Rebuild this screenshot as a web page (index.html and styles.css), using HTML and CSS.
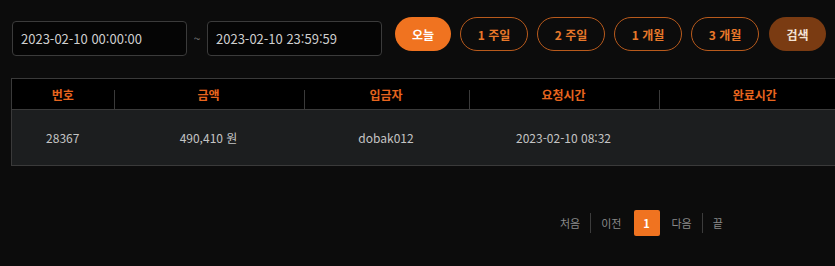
FILE: index.html
```html
<!DOCTYPE html>
<html lang="ko">
<head>
  <meta charset="UTF-8">
  <title>입금내역</title>
  <link rel="stylesheet" href="styles.css">
</head>
<body>
  <div class="search-bar">
    <input type="text" class="date-input" value="2023-02-10 00:00:00">
    <span class="tilde">~</span>
    <input type="text" class="date-input" value="2023-02-10 23:59:59">
    <div class="range-buttons">
      <button class="btn btn-active">오늘</button>
      <button class="btn btn-outline">1 주일</button>
      <button class="btn btn-outline">2 주일</button>
      <button class="btn btn-outline">1 개월</button>
      <button class="btn btn-outline">3 개월</button>
      <button class="btn btn-search">검색</button>
    </div>
  </div>

  <table class="list-table">
    <colgroup>
      <col class="c-num">
      <col class="c-amount">
      <col class="c-name">
      <col class="c-req">
      <col class="c-done">
    </colgroup>
    <thead>
      <tr>
        <th>번호</th>
        <th>금액</th>
        <th>입금자</th>
        <th>요청시간</th>
        <th>완료시간</th>
      </tr>
    </thead>
    <tbody>
      <tr>
        <td>28367</td>
        <td>490,410 원</td>
        <td>dobak012</td>
        <td>2023-02-10 08:32</td>
        <td></td>
      </tr>
    </tbody>
  </table>

  <div class="pager">
    <a class="pg-link">처음</a>
    <span class="pg-sep"></span>
    <a class="pg-link">이전</a>
    <a class="pg-num">1</a>
    <a class="pg-link">다음</a>
    <span class="pg-sep"></span>
    <a class="pg-link">끝</a>
  </div>
</body>
</html>
```

FILE: styles.css
```css
html, body {
  margin: 0;
  height: 100%;
  overflow: hidden;
}
body {
  background-color: #0c0c0c;
  font-family: "Noto Sans CJK KR", "Noto Sans", sans-serif;
  color: #c8c8c8;
}
.search-bar {
  display: flex;
  align-items: flex-start;
  padding: 17px 0 0 12px;
}
.date-input {
  box-sizing: border-box;
  width: 175px;
  height: 35px;
  margin-top: 4px;
  padding: 0 8px;
  background-color: #050505;
  border: 1px solid #3b3b3b;
  border-radius: 4px;
  color: #cfcfcf;
  font-family: inherit;
  font-size: 13px;
  outline: none;
}
.tilde {
  width: 20px;
  margin-top: 12px;
  text-align: center;
  color: #777;
  font-size: 12px;
}
.range-buttons {
  display: flex;
  gap: 9px;
  margin-left: 13px;
}
.btn {
  box-sizing: border-box;
  height: 34px;
  border-radius: 17px;
  font-family: inherit;
  font-size: 12px;
  font-weight: bold;
  cursor: pointer;
}
.btn-active {
  width: 56px;
  background-color: #f07320;
  border: none;
  color: #fff;
}
.btn-outline {
  width: 68px;
  background-color: transparent;
  border: 1px solid #b85a1c;
  color: #e8782a;
}
.btn-search {
  width: 57px;
  margin-left: 1px;
  background-color: #7a3b12;
  border: none;
  color: #f2e2d4;
}
.list-table {
  width: 840px;
  margin: 22px 0 0 11px;
  border-collapse: collapse;
  table-layout: fixed;
  font-size: 12px;
}
.c-num { width: 102px; }
.c-amount { width: 190px; }
.c-name { width: 165px; }
.c-req { width: 190px; }
.list-table th {
  position: relative;
  height: 30px;
  padding: 0;
  background-color: #000;
  border-top: 1px solid #3a3a3a;
  border-bottom: 1px solid #3a3a3a;
  color: #e8651e;
  font-weight: bold;
}
.list-table th + th::before {
  content: "";
  position: absolute;
  left: 0;
  bottom: 0;
  height: 19px;
  border-left: 1px solid #3a3a3a;
}
.list-table thead tr th:first-child {
  border-left: 1px solid #3a3a3a;
}
.list-table td {
  height: 55px;
  padding: 0;
  background-color: #1c1e1f;
  border-bottom: 1px solid #3a3a3a;
  text-align: center;
  color: #c4c4c4;
}
.list-table tbody td:first-child {
  border-left: 1px solid #3a3a3a;
}
.pager {
  display: flex;
  align-items: center;
  margin: 44px 0 0 550px;
  font-size: 11px;
}
.pg-link {
  padding: 0 10px;
  color: #8a8a8a;
}
.pg-sep {
  width: 1px;
  height: 20px;
  background-color: #3c3c3c;
}
.pg-num {
  width: 26px;
  height: 26px;
  margin: 0 2px;
  line-height: 26px;
  text-align: center;
  background-color: #f07320;
  border-radius: 2px;
  color: #fff;
  font-weight: bold;
}
```
